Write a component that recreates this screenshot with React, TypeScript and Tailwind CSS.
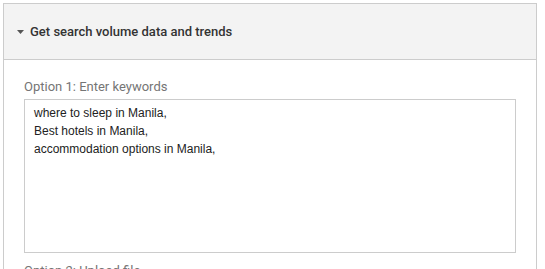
export default function App() {
  return (
    <div className="h-[269px] w-[545px] overflow-hidden bg-white pl-[3px] pt-[3px]">
      <div className="w-[534px] border border-[#cccccc] font-['Roboto',sans-serif]">
        {/* header */}
        <div className="flex h-[56px] items-center gap-[6px] border-b border-[#cccccc] bg-[#f3f3f3] pl-[13px]">
          <svg width="7" height="4" viewBox="0 0 7 4" className="mt-[1px]">
            <path d="M0 0 L7 0 L3.5 4 Z" fill="#555" />
          </svg>
          <span className="text-[13px] font-medium text-[#333]">Get search volume data and trends</span>
        </div>
        {/* body */}
        <div className="px-[20px] pt-[17px] pb-[12px]">
          <div className="text-[13px] leading-[20px] text-[#757575]">Option 1: Enter keywords</div>
          <textarea
            readOnly
            className="mt-[2px] block h-[154px] w-[492px] resize-none border border-[#cccccc] px-[9px] py-[4px] font-['Liberation_Sans',Arial,sans-serif] text-[12px] leading-[18px] text-[#222] outline-none"
            defaultValue={'where to sleep in Manila,\nBest hotels in Manila,\naccommodation options in Manila,'}
          />
          <div className="mt-[8px] text-[13px] leading-[20px] text-[#757575]">Option 2: Upload file</div>
        </div>
      </div>
    </div>
  );
}
